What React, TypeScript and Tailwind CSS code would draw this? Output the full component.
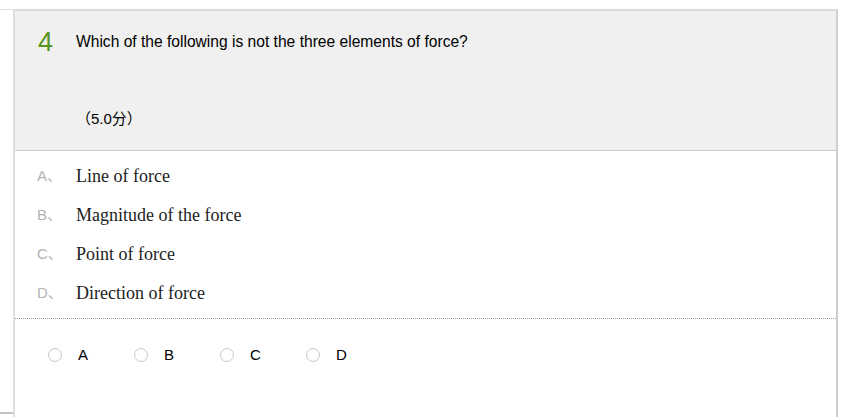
const options = [
  { key: 'A', text: 'Line of force' },
  { key: 'B', text: 'Magnitude of the force' },
  { key: 'C', text: 'Point of force' },
  { key: 'D', text: 'Direction of force' },
];

export default function App() {
  return (
    <div className="w-[853px] h-[417px] overflow-hidden bg-white pt-[9px] font-['Liberation_Sans',Arial,sans-serif]">
      <div className="flex">
        {/* left gutter with its own rules */}
        <div className="w-[13px] h-[405px] border-t border-b-2 border-t-[#e3e3e3] border-b-[#c4c4c4]" />

        <div className="w-[825px] h-[420px] border-l-2 border-t-2 border-r-2 border-l-[#dedede] border-t-[#dcdcdc] border-r-[#cfcfcf]">
          {/* question header */}
          <div className="h-[140px] bg-[#f0f0f0] border-b border-[#c9c9c9] flex flex-col">
            <div className="flex items-center pt-[16px]">
              <span className="w-[61px] pl-[23px] text-[27px] leading-[30px] text-[#5a9420]">4</span>
              <span className="text-[15.6px] text-black">Which of the following is not the three elements of force?</span>
            </div>
            <div className="mt-[51px] pl-[61px] text-[15px] text-black font-['Liberation_Sans','Noto_Sans_CJK_SC',sans-serif]">
              （5.0分）
            </div>
          </div>

          {/* options */}
          <div className="pt-[6px] pb-[5px] border-b border-dotted border-[#9a9a9a]">
            {options.map((o) => (
              <div key={o.key} className="flex items-center h-[39px]">
                <span className="w-[61px] pl-[22px] text-[15px] text-[#b3b3b3] font-['Liberation_Sans','Noto_Sans_CJK_SC',sans-serif]">
                  {o.key}、
                </span>
                <span className="text-[18px] text-[#222] font-['Liberation_Serif',serif]">{o.text}</span>
              </div>
            ))}
          </div>

          {/* answer radios */}
          <div className="flex items-center pt-[25px] pl-[33px]">
            {options.map((o) => (
              <label key={o.key} className="flex items-center w-[86px]">
                <span className="w-[14px] h-[14px] rounded-full border border-[#c8c8c8] bg-white" />
                <span className="ml-[16px] text-[15px] text-black">{o.key}</span>
              </label>
            ))}
          </div>
        </div>
      </div>
    </div>
  );
}
